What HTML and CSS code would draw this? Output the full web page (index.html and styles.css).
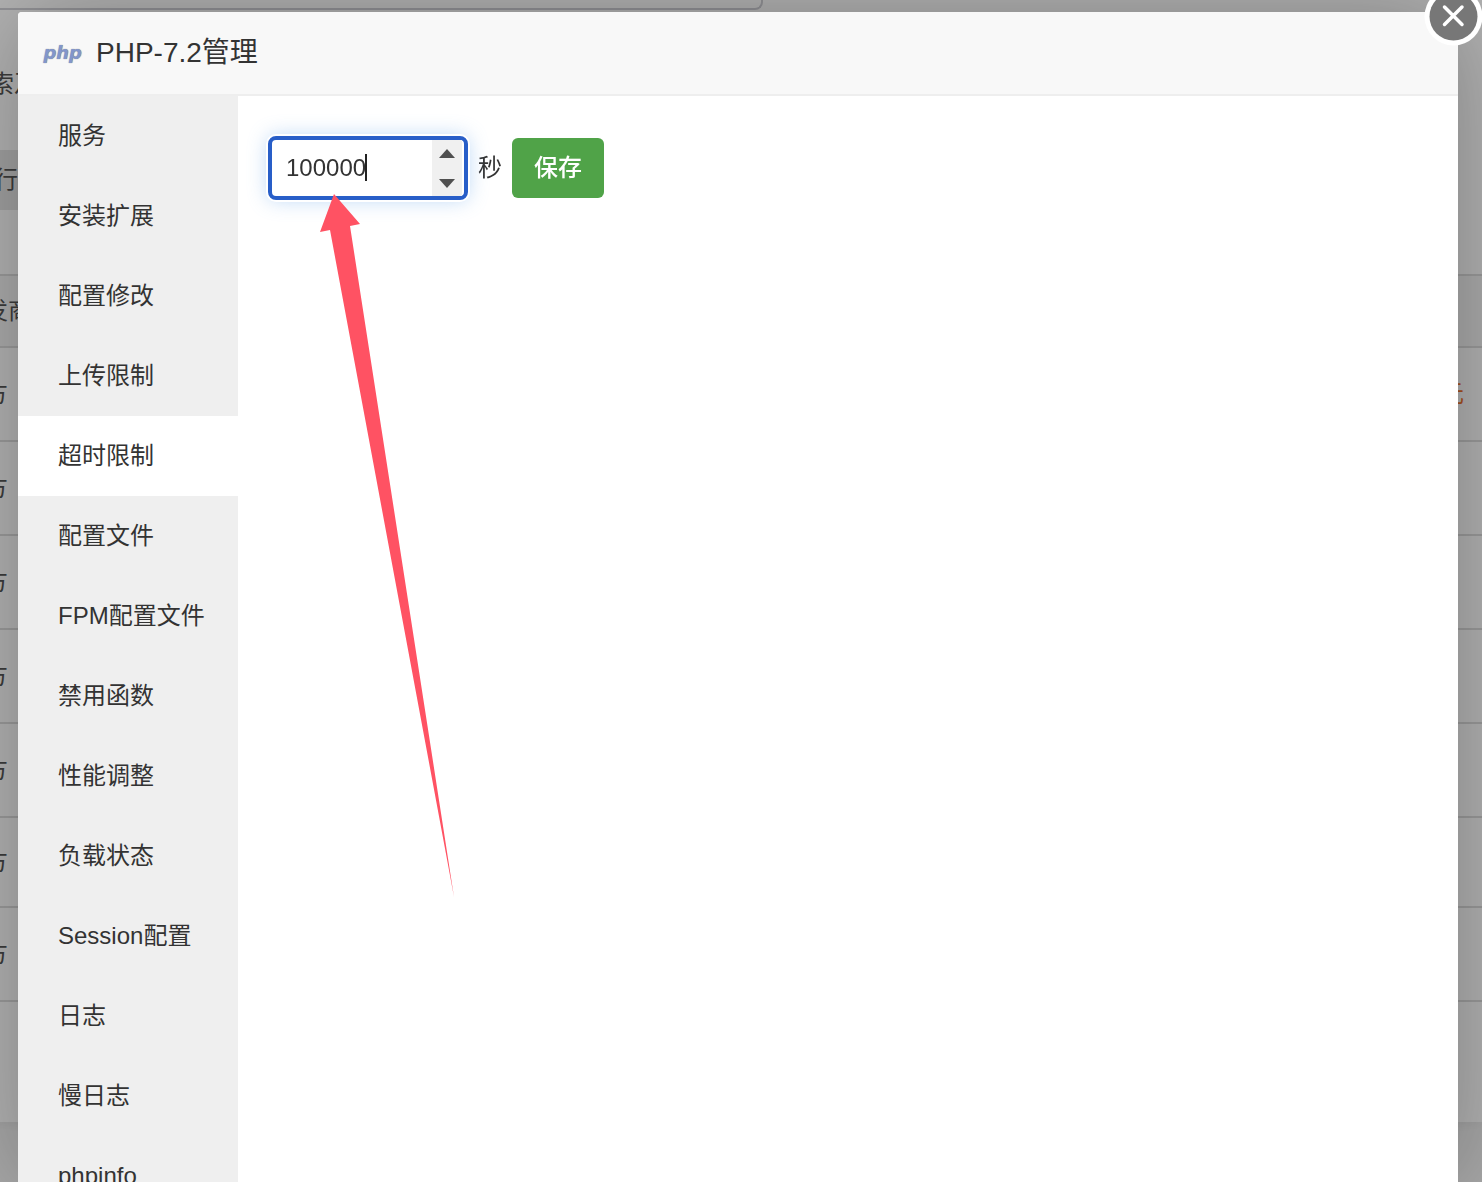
FILE: index.html
```
<!DOCTYPE html>
<html lang="zh-CN">
<head>
    <meta charset="UTF-8">
    <meta name="viewport" content="width=device-width, initial-scale=1.0">
    <title>PHP-7.2管理</title>
    <link rel="stylesheet" href="styles.css">
</head>
<body>
    <div class="page">
        <div class="notice"></div>
        <div class="search">索及</div>
        <div class="types">行</div>
        <table class="soft-table">
            <thead>
                <tr><th>发商</th><th></th></tr>
            </thead>
            <tbody>
                <tr><td>方</td><td class="price">元</td></tr>
                <tr><td>方</td><td></td></tr>
                <tr><td>方</td><td></td></tr>
                <tr><td>方</td><td></td></tr>
                <tr><td>方</td><td></td></tr>
                <tr class="short"><td>方</td><td></td></tr>
                <tr><td>方</td><td></td></tr>
            </tbody>
        </table>
    </div>

    <div class="shade"></div>

    <div class="layer" role="dialog" aria-labelledby="layer-title">
        <header class="layer-title">
            <span class="php-logo">php</span>
            <h1 id="layer-title">PHP-7.2管理</h1>
        </header>
        <button class="close" type="button" aria-label="关闭">
            <svg viewBox="0 0 60 60" width="60" height="60">
                <circle cx="29.5" cy="29.5" r="29" fill="#fff"/>
                <circle cx="29.5" cy="29.5" r="24" fill="#777"/>
                <path d="M20.500 20 L38 37.500 M38 20 L20.500 37.500" stroke="#fff" stroke-width="3.500" stroke-linecap="round"/>
            </svg>
        </button>
        <div class="layer-body">
            <nav class="menu">
                <button type="button">服务</button>
                <button type="button">安装扩展</button>
                <button type="button">配置修改</button>
                <button type="button">上传限制</button>
                <button type="button" class="active">超时限制</button>
                <button type="button">配置文件</button>
                <button type="button">FPM配置文件</button>
                <button type="button">禁用函数</button>
                <button type="button">性能调整</button>
                <button type="button">负载状态</button>
                <button type="button">Session配置</button>
                <button type="button">日志</button>
                <button type="button">慢日志</button>
                <button type="button">phpinfo</button>
            </nav>
            <main class="content">
                <form class="timeout-form">
                    <div class="number">
                        <input type="number" id="timeout" value="100000">
                        <span class="caret"></span>
                        <div class="spin">
                            <button type="button" aria-label="增加" onclick="document.getElementById('timeout').stepUp()"><svg viewBox="0 0 16 9" width="16" height="9"><path d="M0 9 L8 0 L16 9 Z" fill="#505050"/></svg></button>
                            <button type="button" aria-label="减少" onclick="document.getElementById('timeout').stepDown()"><svg viewBox="0 0 16 9" width="16" height="9"><path d="M0 0 L8 9 L16 0 Z" fill="#505050"/></svg></button>
                        </div>
                    </div>
                    <label for="timeout">秒</label>
                    <button class="btn" type="button">保存</button>
                </form>
                <svg class="arrow" viewBox="0 0 136 704" width="136" height="704">
                    <path d="M15 0 L41 30 L31 32 L135 703 L11 36 L1 38 Z" fill="#ff5263"/>
                </svg>
            </main>
        </div>
    </div>
</body>
</html>
```
FILE: styles.css
```
* {
    box-sizing: border-box;
}

body {
    margin: 0;
    height: 100vh;
    overflow: hidden;
    background: #f0f0f0;
    color: #333;
    font-family: "Liberation Sans", "Noto Sans CJK SC", sans-serif;
    font-size: 24px;
    line-height: 36px;
}

button, input {
    margin: 0;
    border: 0;
    font: inherit;
    color: inherit;
}

svg {
    display: block;
}

/* page behind the dialog */
.page {
    height: 1122px;
    margin-left: -16px;
    background: #fff;
    color: #555;
    box-shadow: 0 2px 10px rgba(0, 0, 0, 0.05);
}

.notice {
    width: 52%;
    height: 10px;
    border: 2px solid #d0d0d6;
    border-top: 0;
    border-bottom-right-radius: 8px;
}

.search {
    height: 140px;
    padding: 56px 6px;
}

.types {
    width: 200px;
    height: 60px;
    padding: 12px 10px;
    background: #e6e6e6;
}

.soft-table {
    width: 100%;
    margin-top: 64px;
    border-collapse: separate;
    border-spacing: 0;
    border-top: 2px solid #ddd;
}

.soft-table th,
.soft-table td {
    height: 94px;
    padding: 0;
    border-bottom: 2px solid #ddd;
    text-align: left;
    font-weight: 400;
}

.soft-table th {
    height: 72px;
    background: #f6f6f6;
}

.soft-table .short td {
    height: 90px;
}

.soft-table .price {
    padding-right: 18px;
    text-align: right;
    color: #f0722c;
}

.shade {
    position: fixed;
    inset: 0;
    background: rgba(0, 0, 0, 0.3);
}

/* dialog */
.layer {
    position: fixed;
    inset: 12px 24px 0 18px;
    display: flex;
    flex-direction: column;
    background: #fff;
    border-radius: 4px 4px 0 0;
    box-shadow: 2px 2px 100px rgba(0, 0, 0, 0.3);
}

.layer-title {
    display: flex;
    align-items: center;
    gap: 14px;
    height: 84px;
    flex-shrink: 0;
    padding: 0 24px;
    background: #f8f8f8;
    border-bottom: 2px solid #eee;
    border-radius: 4px 4px 0 0;
}

.layer-title h1 {
    margin: 0;
    font-size: 28px;
    font-weight: 400;
}

.php-logo {
    width: 40px;
    text-align: right;
    color: #8296cb;
    font: italic bold 18px/36px "DejaVu Sans", sans-serif;
    text-shadow: 0 0 1px #777;
}

.close {
    position: absolute;
    top: -25px;
    right: -26px;
    padding: 0;
    background: none;
    cursor: pointer;
}

.layer-body {
    display: flex;
    flex: 1;
    min-height: 0;
}

.menu {
    display: flex;
    flex-direction: column;
    width: 220px;
    overflow: hidden;
    background: #efefef;
}

.menu button {
    height: 80px;
    flex-shrink: 0;
    padding: 0 0 0 40px;
    background: none;
    text-align: left;
    cursor: pointer;
}

.menu .active {
    background: #fff;
}

.content {
    position: relative;
    flex: 1;
    padding: 40px 30px;
}

.timeout-form {
    display: flex;
    align-items: center;
    gap: 10px;
}

.number {
    position: relative;
    display: flex;
    width: 200px;
    height: 64px;
    padding-right: 2px;
    border: 4px solid #285ec8;
    border-radius: 8px;
    background: #fff;
    box-shadow: 0 0 0 2px #fff, 0 0 20px rgba(102, 165, 233, 0.45);
}

.number input {
    flex: 1;
    min-width: 0;
    padding: 0 0 0 14px;
    background: none;
    outline: none;
    appearance: textfield;
}

.caret {
    position: absolute;
    top: 14px;
    left: 93px;
    width: 2px;
    height: 27px;
    background: #222;
}

.spin {
    display: flex;
    flex-direction: column;
    justify-content: space-between;
    width: 30px;
    background: #f0f0f0;
}

.spin button {
    display: flex;
    height: 26px;
    align-items: center;
    justify-content: center;
    padding: 0;
    background: none;
}

.btn {
    height: 60px;
    padding: 0 22px;
    border-radius: 6px;
    background: #50a348;
    color: #fff;
    font-weight: 500;
    cursor: pointer;
}

.arrow {
    position: absolute;
    top: 98px;
    left: 81px;
    pointer-events: none;
}
```
